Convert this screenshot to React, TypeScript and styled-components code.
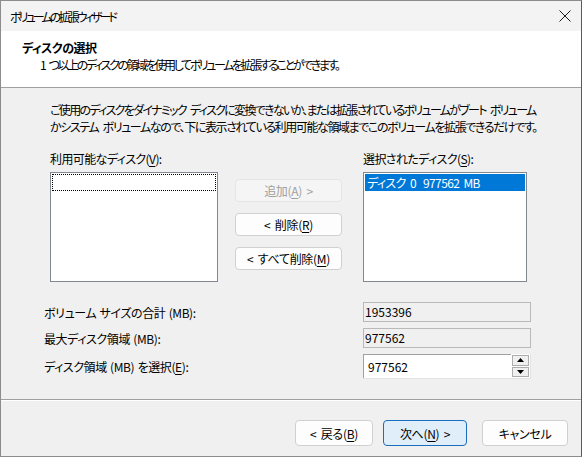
import React from "react";
import styled, { createGlobalStyle } from "styled-components";

const GlobalStyle = createGlobalStyle`
  html, body {
    margin: 0;
    padding: 0;
    background: #f0f0f0;
  }
  body {
    font-family: "Noto Sans CJK JP", "Noto Sans", sans-serif;
    font-size: 12px;
    font-feature-settings: "palt";
    color: #000;
  }
`;

const Window = styled.div`
  width: 582px;
  height: 457px;
  box-sizing: border-box;
  border: 1px solid #8c8c8c;
  border-right-color: #5a5a5a;
  display: flex;
  flex-direction: column;
  background: #f0f0f0;
`;

const TitleBar = styled.div`
  height: 30px;
  display: flex;
  align-items: center;
  justify-content: space-between;
  padding: 0 8px 0 9px;
  background: #f3f3f3;
`;

const Title = styled.span`
  font-size: 12px;
  line-height: 17px;
  letter-spacing: -2.9px;
`;

const CloseButton = styled.div`
  width: 16px;
  height: 16px;
  display: flex;
  align-items: center;
  justify-content: center;
`;

const Header = styled.div`
  height: 57px;
  background: #fff;
  border-bottom: 1px solid #a0a0a0;
  padding: 8px 0 0 21px;
  box-sizing: border-box;
`;

const HeaderTitle = styled.div`
  font-weight: bold;
  line-height: 17px;
  letter-spacing: -0.5px;
`;

const HeaderSub = styled.div`
  line-height: 17px;
  padding-left: 18px;
  letter-spacing: -2.4px;
  word-spacing: 4px;
  white-space: nowrap;
`;

const Body = styled.div`
  flex: 1;
  padding: 13px 0 0 49px;
  display: flex;
  flex-direction: column;
`;

const Paragraph = styled.p<{ $ls: number }>`
  margin: 0;
  line-height: 17px;
  white-space: nowrap;
  letter-spacing: ${(p) => p.$ls}px;
  word-spacing: 3px;
`;

const Columns = styled.div`
  display: grid;
  grid-template-columns: 168px 107px 168px;
  column-gap: 17px;
  margin-top: 15px;
  & > :last-child {
    margin-left: 4px;
  }
`;

const Column = styled.div`
  display: flex;
  flex-direction: column;
`;

const Label = styled.label`
  line-height: 17px;
  height: 17px;
  margin-bottom: 5px;
  white-space: nowrap;
  letter-spacing: -0.6px;
`;

const ListBox = styled.div`
  height: 110px;
  box-sizing: border-box;
  border: 1px solid #828790;
  background: #fff;
  padding: 1px;
`;

const ListRow = styled.div<{ $selected?: boolean; $focus?: boolean }>`
  height: 17px;
  box-sizing: border-box;
  display: flex;
  align-items: center;
  padding-left: 1px;
  white-space: nowrap;
  background: ${(p) => (p.$selected ? "#0078d7" : "transparent")};
  color: ${(p) => (p.$selected ? "#fff" : "#000")};
  border: 1px dotted ${(p) => (p.$focus ? "#000" : "transparent")};
`;

const Cell = styled.span<{ $w?: number }>`
  flex: 0 0 auto;
  width: ${(p) => (p.$w ? `${p.$w}px` : "auto")};
  letter-spacing: -0.6px;
  word-spacing: 2px;
`;

const ButtonStack = styled.div`
  display: flex;
  flex-direction: column;
  gap: 11px;
  padding-top: 29px;
`;

const Button = styled.button<{ $primary?: boolean; $w?: number; $h?: number; $ml?: number }>`
  font: inherit;
  width: ${(p) => (p.$w ? `${p.$w}px` : "100%")};
  height: ${(p) => p.$h ?? 23}px;
  margin-left: ${(p) => p.$ml ?? 0}px;
  box-sizing: border-box;
  border-radius: 4px;
  border: 1px solid ${(p) => (p.$primary ? "#1a6dbf" : "#d0d0d0")};
  background: ${(p) => (p.$primary ? "#e0eef9" : "#fdfdfd")};
  color: #000;
  padding: 0;
  display: flex;
  align-items: center;
  justify-content: center;
  white-space: pre;
  letter-spacing: -0.3px;
  word-spacing: 2px;
  &:disabled {
    color: #a0a0a0;
    background: #f5f5f5;
    border-color: #e5e5e5;
  }
`;

const Fields = styled.div`
  display: grid;
  grid-template-columns: 319px 168px;
  row-gap: 6px;
  margin: 20px 0 0 -6px;
  align-items: center;
`;

const FieldLabel = styled.span`
  line-height: 17px;
  white-space: nowrap;
  letter-spacing: -0.4px;
  word-spacing: 1px;
`;

const ReadOnlyBox = styled.div`
  height: 20px;
  box-sizing: border-box;
  border: 1px solid #b9b9b9;
  background: #f0f0f0;
  line-height: 18px;
  padding-left: 1px;
`;

const SpinBox = styled.div`
  height: 25px;
  display: flex;
  box-sizing: border-box;
  background: #fff;
  border: 1px solid #7a7a7a;
  border-width: 0 1px 1px 0;
  border-right-color: #e3e3e3;
  border-bottom-color: #e3e3e3;
`;

const SpinValue = styled.div`
  flex: 1;
  line-height: 23px;
  padding-left: 4px;
  border-top: 1px solid #a0a0a0;
  border-left: 1px solid #a0a0a0;
`;

const SpinButtons = styled.div`
  width: 17px;
  display: flex;
  flex-direction: column;
  padding: 1px;
  gap: 1px;
  background: #fff;
`;

const SpinArrow = styled.div`
  flex: 1;
  background: #f0f0f0;
  border: 1px solid #adadad;
  display: flex;
  align-items: center;
  justify-content: center;
`;

const Footer = styled.div`
  height: 57px;
  border-top: 1px solid #a0a0a0;
  box-shadow: inset 0 1px 0 #fff;
  display: flex;
  align-items: flex-start;
  justify-content: flex-end;
  padding: 20px 13px 0 0;
  box-sizing: border-box;
  gap: 10px;
`;

const Mn = styled.u`
  text-decoration-thickness: 1px;
  text-underline-offset: 2px;
`;

const App = () => {
  return (
    <>
      <GlobalStyle />
      <Window>
        <TitleBar>
          <Title>ボリュームの拡張ウィザード</Title>
          <CloseButton>
            <svg width="12" height="12" viewBox="0 0 12 12">
              <path d="M0.5 0.5 L11.5 11.5 M11.5 0.5 L0.5 11.5" stroke="#1a1a1a" strokeWidth="1" />
            </svg>
          </CloseButton>
        </TitleBar>
        <Header>
          <HeaderTitle>ディスクの選択</HeaderTitle>
          <HeaderSub>1 つ以上のディスクの領域を使用してボリュームを拡張することができます。</HeaderSub>
        </Header>
        <Body>
          <Paragraph $ls={-1.7}>
            ご使用のディスクをダイナミック ディスクに変換できないか、または拡張されているボリュームがブート ボリューム
          </Paragraph>
          <Paragraph $ls={-1.4}>
            かシステム ボリュームなので、下に表示されている利用可能な領域までこのボリュームを拡張できるだけです。
          </Paragraph>
          <Columns>
            <Column>
              <Label>
                利用可能なディスク(<Mn>V</Mn>):
              </Label>
              <ListBox>
                <ListRow $focus />
              </ListBox>
            </Column>
            <ButtonStack>
              <Button disabled>
                追加(<Mn>A</Mn>) &gt;
              </Button>
              <Button>
                &lt; 削除(<Mn>R</Mn>)
              </Button>
              <Button>
                &lt; すべて削除(<Mn>M</Mn>)
              </Button>
            </ButtonStack>
            <Column>
              <Label>
                選択されたディスク(<Mn>S</Mn>):
              </Label>
              <ListBox>
                <ListRow $selected>
                  <Cell $w={56}>ディスク 0</Cell>
                  <Cell>977562 MB</Cell>
                </ListRow>
              </ListBox>
            </Column>
          </Columns>
          <Fields>
            <FieldLabel>ボリューム サイズの合計 (MB):</FieldLabel>
            <ReadOnlyBox>1953396</ReadOnlyBox>
            <FieldLabel>最大ディスク領域 (MB):</FieldLabel>
            <ReadOnlyBox>977562</ReadOnlyBox>
            <FieldLabel>
              ディスク領域 (MB) を選択(<Mn>E</Mn>):
            </FieldLabel>
            <SpinBox>
              <SpinValue>977562</SpinValue>
              <SpinButtons>
                <SpinArrow>
                  <svg width="7" height="4" viewBox="0 0 7 4">
                    <path d="M3.5 0 L7 4 L0 4 Z" fill="#000" />
                  </svg>
                </SpinArrow>
                <SpinArrow>
                  <svg width="7" height="4" viewBox="0 0 7 4">
                    <path d="M0 0 L7 0 L3.5 4 Z" fill="#000" />
                  </svg>
                </SpinArrow>
              </SpinButtons>
            </SpinBox>
          </Fields>
        </Body>
        <Footer>
          <Button $w={78} $h={26}>
            &lt; 戻る(<Mn>B</Mn>)
          </Button>
          <Button $primary $w={84} $h={26}>
            次へ(<Mn>N</Mn>) &gt;
          </Button>
          <Button $w={86} $h={26} $ml={5}>
            キャンセル
          </Button>
        </Footer>
      </Window>
    </>
  );
};

export default App;
